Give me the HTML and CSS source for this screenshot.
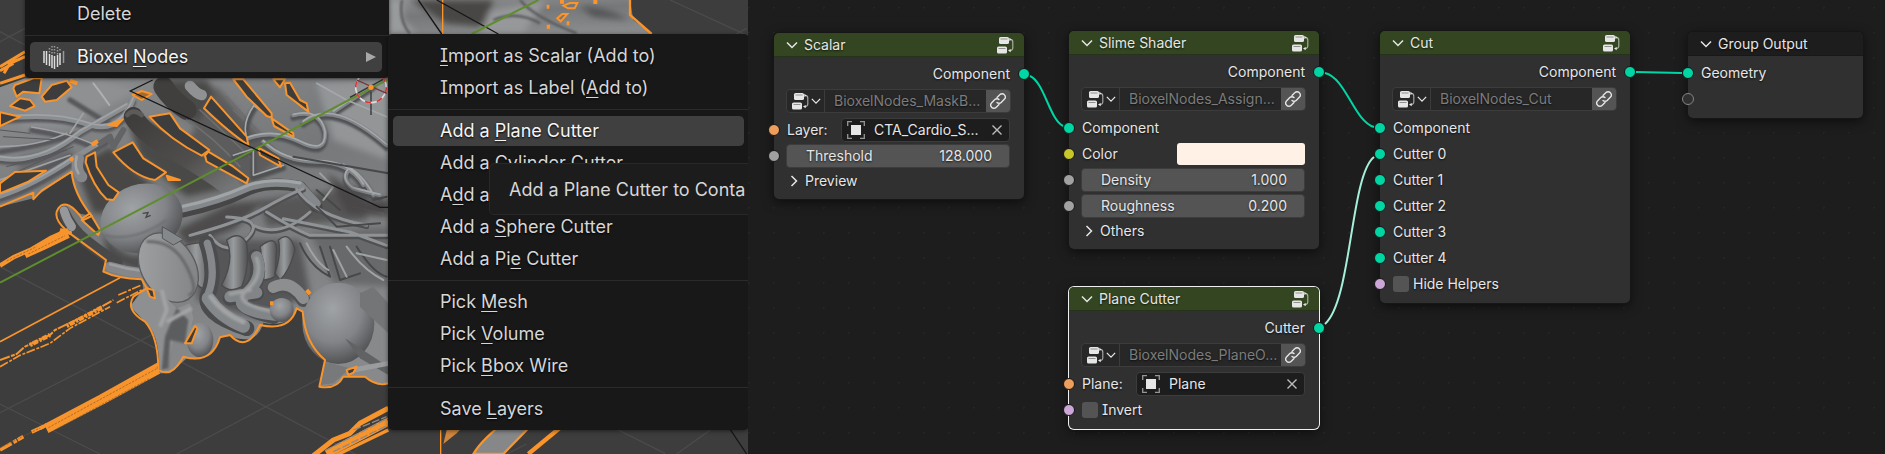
FILE: index.html
```html
<!DOCTYPE html>
<html lang="en">
<head>
<meta charset="utf-8">
<title>Bioxel Nodes</title>
<link rel="stylesheet" href="styles.css">
</head>
<body>
<svg class="defs" aria-hidden="true">
  <symbol id="i-group" viewBox="0 0 18 18">
    <rect x="3" y="1" width="10" height="7" rx="1.6"/><rect x="1" y="10.500" width="10" height="7" rx="1.600"/>
    <path d="M4.500 3h7M2.500 12.500h7" stroke="#222" stroke-opacity=".55" stroke-width=".8"/>
    <path d="M13.800 3.400c2.300 0 3 .8 3 2.700v5.600c0 1.900-.8 2.800-3.300 2.800" fill="none" stroke="currentColor" stroke-opacity=".65" stroke-width="1.200"/>
    <path d="M13.300 1.800l2.300 1.700-2.300 1.500zM14.700 13l-2.700 1.500 2.700 1.700z"/>
  </symbol>
  <symbol id="i-down" viewBox="0 0 12 12"><path d="M1 3.500l5 5 5-5" fill="none" stroke="currentColor" stroke-width="1.500"/></symbol>
  <symbol id="i-right" viewBox="0 0 12 12"><path d="M3.500 1l5 5-5 5" fill="none" stroke="currentColor" stroke-width="1.500"/></symbol>
  <symbol id="i-x" viewBox="0 0 12 12"><path d="M1.500 1.500l9 9M10.500 1.500l-9 9" fill="none" stroke="currentColor" stroke-opacity=".8" stroke-width="1.400"/></symbol>
  <symbol id="i-link" viewBox="0 0 18 18"><g fill="none" stroke="currentColor" stroke-width="1.400" stroke-linecap="round" stroke-linejoin="round"><path d="M8 5.600l3-3a2.900 2.900 0 0 1 4.200 0l.3.300a2.900 2.900 0 0 1 0 4.200l-3.300 3.300a2.900 2.900 0 0 1-4.200 0"/><path d="M10 12.400l-3 3a2.900 2.900 0 0 1-4.200 0l-.3-.3a2.900 2.900 0 0 1 0-4.200l3.300-3.300a2.900 2.900 0 0 1 4.200 0"/></g></symbol>
  <symbol id="i-object" viewBox="0 0 18 18"><rect x="4" y="4" width="10" height="10"/><path d="M.7 5V.7H5M13 .7h4.300V5M17.300 13v4.300H13M5 17.300H.7V13" fill="none" stroke="currentColor" stroke-opacity=".6" stroke-width="1.300"/></symbol>
</svg>

<main class="screen">
<section class="viewport" aria-label="3D Viewport">
  <svg class="scene" viewBox="0 0 2244 1362" preserveAspectRatio="xMinYMin slice" aria-hidden="true">
    <defs>
      <linearGradient id="body" x1="0" y1="0" x2=".4" y2="1"><stop offset="0" stop-color="#8b8d8f"/><stop offset=".45" stop-color="#767879"/><stop offset="1" stop-color="#87898b"/></linearGradient>
      <radialGradient id="ball" cx=".42" cy=".32" r=".75"><stop offset="0" stop-color="#a0a3a5"/><stop offset=".55" stop-color="#828487"/><stop offset="1" stop-color="#48484a"/></radialGradient>
      <linearGradient id="disc" x1="0" y1="0" x2="1" y2="1"><stop offset="0" stop-color="#a2a4a5"/><stop offset="1" stop-color="#7d7f80"/></linearGradient>
      <linearGradient id="tube" x1="0" y1="0" x2="1" y2="0"><stop offset="0" stop-color="#5f6062"/><stop offset=".45" stop-color="#999c9e"/><stop offset="1" stop-color="#515153"/></linearGradient>
      <linearGradient id="rib" x1="0" y1="0" x2="1" y2="1"><stop offset="0" stop-color="#3f3d3c"/><stop offset=".6" stop-color="#504e4d"/><stop offset="1" stop-color="#747576"/></linearGradient>
      <filter id="soft" x="-20%" y="-20%" width="140%" height="140%"><feGaussianBlur stdDeviation="9"/></filter>
      <filter id="soft2"><feGaussianBlur stdDeviation="3"/></filter>
    </defs>
    <rect width="2244" height="1362" fill="#3d3d3d"/>
    <g stroke="#4b4b4b" stroke-width="4" fill="none"><path d="M0 125L75 85M0 95l75 40M0 1238L1165 640M530 1362L1165 1026M0 800l410 215 755 400M0 1212l300 150M2010 0l240 110M2240 85l-130 70M1520 1362l60-30M1765 1245l230 115M2030 1362l160-115"/></g>

    <path d="M0 262L75 235H1165V1150H1125L1095 1130H1030L1010 1155 958 1160 975 1080 Q915 1030 908 935L890 925 Q870 985 790 968 Q770 1040 690 1008L660 1012 Q635 1090 560 1075L510 1120H478Q480 1000 435 965L390 920 430 865 425 838 Q350 835 310 815L318 780 230 715Q180 670 172 630 190 595 235 640L275 648Q220 580 215 515L100 595 0 620Z" fill="url(#body)"/>
    <g filter="url(#soft)">
      <path d="M225 500L330 440 460 560 330 640 280 640Z" fill="#484645"/><path d="M380 350Q540 370 700 560L560 590 420 470Z" fill="#4a4847"/>
      <path d="M470 240L620 240 760 430 700 440 520 330Z" fill="#4a4847"/><path d="M650 260L840 480 740 560 560 430Z" fill="#5d5c5c"/>
      <path d="M780 600L1100 560V660L800 680Z" fill="#565657"/><path d="M530 690L690 610 800 600 700 690 560 740Z" fill="#4e4c4c"/>
      <path d="M310 700Q380 790 440 760L430 820 320 780Z" fill="#4c4b4b"/><path d="M600 720H900L930 880 780 960 590 900Z" fill="#575759"/>
      <path d="M930 700L1165 680V860L1000 850Z" fill="#68696b"/><path d="M60 470L210 440 230 480 50 560Z" fill="#6a6b6d"/>
      <path d="M950 250L1165 240V480L1000 420Z" fill="#939597"/><path d="M120 260L300 240 420 270 200 380 60 380Z" fill="#8e9092"/>
    </g>
    <g fill="none" stroke-linecap="round" stroke-linejoin="round">
      <g stroke="#58595b" stroke-width="16" filter="url(#soft2)"><path d="M0 366Q160 346 260 381T400 306M0 456Q120 440 240 400M0 484Q120 504 240 404L380 324M0 600Q100 570 220 490L320 430M95 391Q200 406 290 446M60 540L210 470M210 300L340 380"/></g>
      <g stroke="#8b8e90" stroke-width="16"><path d="M0 356Q160 336 260 371T400 296M0 474Q120 494 240 396L380 316M0 588Q100 555 220 475L320 415"/></g>
      <g stroke="#a0a3a5" stroke-width="5"><path d="M0 352Q160 332 260 367T400 292M0 470Q120 490 240 392L380 312M0 582Q100 551 220 471M95 381Q200 396 290 436M0 540L210 466M0 440Q110 440 200 400M210 400L250 340"/></g>
      <path d="M10 410L180 420M20 500L200 450M40 520L220 440M0 390L90 400" stroke="#55575a" stroke-width="3"/>
      <path d="M490 260Q515 300 560 330" stroke="#413f3e" stroke-width="60"/><path d="M400 350Q430 400 520 450T690 560" stroke="url(#rib)" stroke-width="58"/><path d="M382 345Q400 325 425 345" stroke="#5c5b5a" stroke-width="14"/><path d="M570 258Q590 282 605 285" stroke="#8f9193" stroke-width="32"/>
      <path d="M235 475Q225 510 245 530" stroke="#85878a" stroke-width="34"/><path d="M230 470Q222 500 235 520" stroke="#a2a4a6" stroke-width="8"/><path d="M300 430L330 410 340 440 370 390" stroke="#636466" stroke-width="18"/>
      <path d="M190 635Q215 690 260 725T350 790" stroke="#4a494a" stroke-width="36"/><path d="M192 632Q200 660 215 680" stroke="#96989a" stroke-width="26"/><path d="M330 800Q380 815 430 820" stroke="#85878a" stroke-width="30"/><path d="M330 793Q380 808 430 813" stroke="#9c9ea0" stroke-width="8"/>
      <path d="M280 250Q300 275 328 315" stroke="#aeb0b2" stroke-width="6"/>
      <path d="M560 360Q640 410 720 500M600 330L760 480M680 290L800 420M700 330L830 450M540 410Q600 470 700 520" stroke="#6e6e6f" stroke-width="5"/>
      <g stroke="#505153" stroke-width="17" filter="url(#soft2)"><path d="M740 414Q730 374 765 324M740 424Q820 394 900 434T975 404Q960 334 880 354M790 434Q850 494 950 494T1090 564M910 374Q1000 304 1160 444M1000 344L1120 264M1030 504Q1080 524 1120 594M700 474L760 454V534L850 504M1050 514Q1020 544 1060 574L1140 594"/></g>
      <g stroke="#818487" stroke-width="12"><path d="M740 416Q820 386 900 426T975 396Q960 326 880 346M790 425Q850 485 950 485T1090 555M910 366Q1000 296 1160 436M1000 336L1120 256M1030 496Q1080 516 1120 586M1050 506Q1020 536 1060 566L1140 586"/></g>
      <g stroke="#a5a8aa" stroke-width="5"><path d="M738 404Q728 364 763 314M740 413Q820 383 900 423T975 393Q960 323 880 343M790 422Q850 482 950 482T1090 552M910 363Q1000 293 1160 433M1000 333L1120 253M1030 493Q1080 513 1120 583M700 466L760 446V526L850 496M1048 503Q1018 533 1058 563L1140 583M765 320L810 350M950 250L1040 300 1160 350"/></g>
      <path d="M550 635Q660 610 730 575T900 560L950 620" stroke="#464647" stroke-width="35"/><path d="M550 625Q660 600 730 568T900 555L950 610" stroke="#85888a" stroke-width="24"/><path d="M550 619Q660 594 730 562T900 549" stroke="#a2a5a7" stroke-width="9"/>
      <g stroke="#505052" stroke-width="15"><path d="M570 710Q720 670 790 630T910 570M630 710Q680 780 740 720T680 655M800 640Q880 690 930 710H1160M890 570Q940 650 1100 680M760 680Q840 720 930 640M850 660L1050 700 1160 740"/></g>
      <g stroke="#909395" stroke-width="9"><path d="M570 706Q720 666 790 626T910 566M630 706Q680 776 740 716T680 651M800 636Q880 686 930 706H1160M890 566Q940 646 1100 676M760 676Q840 716 930 636M850 656L1050 696 1160 736"/></g>
      <g stroke="#47484a" stroke-width="6"><path d="M900 730Q930 800 990 830L960 740M990 740L1020 840 1080 820M1070 740Q1120 820 1160 830M880 470L1165 520M950 620l60 60 130-10M950 570L1020 630M1120 600l40-10"/></g>
      <path d="M920 730Q950 790 985 810M1000 750L1040 830M1040 740Q1090 810 1150 840M1070 760L1160 780M960 520L1000 560 970 600M1060 620L1150 640" stroke="#a0a3a5" stroke-width="6"/>
      <path d="M980 520L1100 600 1165 600V650L1040 640Z" fill="#484747" stroke="none" filter="url(#soft)"/>
    </g>
    <ellipse cx="425" cy="655" rx="125" ry="102" transform="rotate(-18 425 655)" fill="url(#ball)"/><path d="M305 705Q400 730 500 660" stroke="#6b6c6e" stroke-width="5" fill="none" filter="url(#soft2)"/><path d="M428 640l16-2-6 14 14-6" stroke="#444" stroke-width="4" fill="none"/>
    <g fill="url(#tube)" stroke="#4b4b4d" stroke-width="4"><path d="M545 740Q600 720 640 735V850Q610 880 590 850Z"/><path d="M680 720Q720 690 740 730 750 800 725 860 690 880 665 855 705 780 680 720Z"/><path d="M780 740Q830 700 830 750L825 830Q790 850 765 830 790 770 780 740Z"/><path d="M835 720Q870 690 885 750 870 810 840 840L825 820Q845 760 835 720Z"/></g>
    <ellipse cx="505" cy="803" rx="80" ry="112" transform="rotate(-32 505 803)" fill="url(#disc)" stroke="#5a5b5d" stroke-width="4"/><path d="M440 725Q520 720 560 800T565 885" fill="none" stroke="#656668" stroke-width="8" filter="url(#soft2)"/><path d="M487 680L550 718 520 735 487 715Z" fill="#85888a" stroke="#555557" stroke-width="3"/>
    <g fill="none" stroke-linecap="round"><path d="M620 730Q650 820 625 880T740 985" stroke="#4b4c4e" stroke-width="46"/><path d="M622 730Q650 820 625 880" stroke="#85878a" stroke-width="22"/><path d="M625 895Q660 950 730 978" stroke="#85888a" stroke-width="40"/><path d="M632 890Q667 940 730 966" stroke="#a2a4a6" stroke-width="14" filter="url(#soft2)"/>
    <path d="M765 770Q790 840 740 880T820 950M690 895L770 880" stroke="#4b4c4e" stroke-width="44"/><path d="M770 770Q795 830 740 880T825 945M690 890L770 878" stroke="#828587" stroke-width="34"/><path d="M770 775Q790 830 740 870T825 935M690 882L750 870" stroke="#9fa1a3" stroke-width="11" filter="url(#soft2)"/>
    <path d="M820 865Q870 840 910 900" stroke="#505153" stroke-width="42"/><path d="M820 862Q870 835 910 895" stroke="#8c8e90" stroke-width="34"/></g>
    <circle cx="845" cy="930" r="36" fill="url(#ball)"/><ellipse cx="600" cy="1020" rx="40" ry="52" fill="url(#ball)"/>
    <path d="M392 918L430 870 480 875 530 925 570 910 580 955 560 1030 520 1020 500 1112 478 1108Q480 1000 435 965Z" fill="#8d8f91"/><path d="M530 925L565 960 555 1030 510 1020 505 1105 485 1110 495 1010Z" fill="#5c5d5f" filter="url(#soft2)"/><path d="M485 870L500 930 480 980M575 925L500 965" fill="none" stroke="#a2a4a6" stroke-width="12" filter="url(#soft2)"/>
    <ellipse cx="1015" cy="970" rx="108" ry="122" fill="url(#ball)"/><path d="M1080 880L1120 860 1165 910V1000L1080 920Z" fill="#737577"/><path d="M1035 1015L1165 1100V1125L1080 1075Z" fill="#606264"/><path d="M975 1085L1050 1105 1000 1150 960 1155Z" fill="#77797b"/><path d="M1060 1110L1165 1090" stroke="#9a9c9e" stroke-width="15"/>

    <g fill="#3d3d3d" stroke="#f8942c" stroke-width="6" stroke-linejoin="round">
      <path d="M45 255L100 235H125L118 280 70 275 50 290 40 265Z"/><path d="M125 290L155 255 200 242 215 262 170 300 135 305Z"/><path d="M30 318L60 295 90 300 104 318 75 332Z"/><path d="M0 337L60 350 0 378Z"/><path d="M0 550L45 516 138 512 85 545 0 580Z"/>
      <path d="M285 457L290 500 325 555 356 577 340 600 320 598Q280 560 257 487L260 470Z"/><path d="M340 457L398 427 430 475 498 517 465 540Q400 530 340 457Z"/><path d="M448 350L510 340 540 385 628 450 605 467Q510 420 448 350Z"/><path d="M612 325L633 290 740 410 745 435Q690 400 612 325Z"/><path d="M615 467L625 455 700 500 745 535 740 550 620 485Z"/><path d="M700 238H730L815 340V353L800 348 740 290Z"/><path d="M820 238H855L840 262Z"/><path d="M855 250L870 248 900 300 920 310 925 335 860 285Z"/><path d="M815 355L880 400 880 410 822 378Z"/><path d="M775 443L835 475 843 500 780 465Z"/><path d="M398 285L425 273 455 282 425 300Z" fill="#a06b35"/><path d="M325 375L368 358 350 378Z" fill="#f8942c"/><path d="M500 527L540 540 505 540Z" fill="#f8942c"/><path d="M247 655L270 640 300 690 295 705 245 660Z"/><path d="M555 1030L585 978 592 985 575 1030Z"/><path d="M440 865L460 870 465 895 450 890Z"/><path d="M1040 1110L1070 1100 1060 1118 1045 1125Z"/>
    </g>
    <g fill="none" stroke="#f8942c" stroke-width="6" stroke-linejoin="round"><path d="M0 620L100 578V598L125 572 215 515Q220 580 275 648L250 660Q200 590 175 625T230 715L318 780 310 815Q350 835 425 838L440 865 400 890Q375 930 435 965 475 1010 475 1110 515 1135 550 1070 635 1095 660 1012L690 1005Q740 1060 780 975 870 995 890 925L908 935Q915 1030 975 1080L958 1160Q1010 1170 1030 1130H1095Q1130 1160 1165 1150"/><path d="M920 870l10 12M810 910h10M210 475l10 5M275 435l18-12M210 242l22 8" stroke-width="12"/></g>
    <g fill="none" stroke="#f8942c" stroke-linejoin="round">
      <path d="M0 200L75 155M0 212L40 190M0 250L75 225M12 220L30 190 75 170" stroke-width="9"/>
      <path d="M0 797L40 772 90 750 150 715 205 690" stroke-width="13"/><path d="M75 765L130 740 205 704" stroke-width="20"/><path d="M180 690L215 700" stroke-width="12"/>
      <path d="M0 1025L360 833" stroke-width="5"/>
      <path d="M0 1080L50 1062 75 1040 150 1005 165 990 260 945 340 900" stroke-width="6" stroke-dasharray="31 4 12 3"/><path d="M0 1100L60 1066 150 1030 210 985 330 920M355 885L425 855M350 908L425 870" stroke-width="5" stroke-dasharray="27 5 9 4"/><path d="M90 1035L150 1005M200 978L310 920" stroke-width="13" stroke-dasharray="7 3 16 5"/>
      <path d="M0 1350L70 1310M95 1296L140 1275" stroke-width="11" stroke-dasharray="40 6 12 3"/><path d="M120 1285L300 1190 475 1092" stroke-width="11"/><path d="M140 1288L310 1200 475 1110" stroke-width="24"/><path d="M250 1228L330 1190" stroke-width="12"/>
      <path d="M930 1375L1000 1320 1050 1300 1080 1270 1165 1225" stroke-width="15"/><path d="M980 1362L1165 1265" stroke-width="24"/><path d="M1010 1365L1165 1290" stroke-width="10"/>
    </g>
    <path d="M145 1283L470 1106M170 1287L450 1135M0 1344l120-60M85 762l110-55M20 783l90-43" fill="none" stroke="#8a5a26" stroke-width="2" stroke-dasharray="7 4"/>
    <path d="M975 1352l190-98M1000 1355l165-80M1060 1290l100-40" fill="none" stroke="#908a84" stroke-width="4" stroke-dasharray="24 6"/>
    <path d="M0 848L1165 238" stroke="#5f8d2d" stroke-width="6"/><path d="M458 240L391 273 1140 622H1165" fill="none" stroke="#171717" stroke-width="4"/><path d="M1050 292L1155 235M1113 275V345" stroke="#333" stroke-width="4"/>
    <circle cx="1113" cy="262" r="46" fill="none" stroke="#ddd" stroke-width="5"/><circle cx="1113" cy="262" r="46" fill="none" stroke="#df3434" stroke-width="5" stroke-dasharray="18 18"/><path d="M1070 240L1160 280" stroke="#7d3038" stroke-width="4"/><circle cx="1113" cy="262" r="8" fill="#fb952b"/>

    <path d="M1165 0H1890L1900 60 1955 102H1165Z" fill="url(#body)"/><g filter="url(#soft)"><path d="M1230 0H1480L1460 80 1340 70Z" fill="#484645"/><path d="M1165 0H1210V60L1250 100H1165Z" fill="#999b9d"/><path d="M1740 20Q1820 20 1890 60L1780 50Z" fill="#515152"/><path d="M1470 30l170-30-70 100h-130z" fill="#96989a"/></g><path d="M1206 0Q1195 60 1230 102M1480 60Q1550 30 1620 70M1560 0Q1600 50 1730 100" stroke="#58595b" stroke-width="7" fill="none" filter="url(#soft2)"/>
    <path d="M1890 0V45L1955 102" fill="none" stroke="#fb952b" stroke-width="7"/><path d="M1690 17l20-8h22l-8 16h-20zM1672 55l15-13h15l-20 22z" fill="#777" stroke="#fb952b" stroke-width="6"/><path d="M1640 20h8M1680 5h12M1640 80h10M1780 6h12M1700 70h8" stroke="#fb952b" stroke-width="12"/><path d="M1328 0V102M1322 1235V1362" stroke="#fb952b" stroke-width="4"/><path d="M1255 0l70 102M1310 0l185 102M2155 1235l85 127" stroke="#171717" stroke-width="4"/><path d="M1615 0L1415 102" stroke="#5f8d2d" stroke-width="6"/>
    <path d="M1330 1332L1370 1300 1430 1238H1400L1340 1290Z" fill="#cf8740"/><path d="M1420 1362Q1450 1310 1550 1240H1615L1580 1290 1510 1362Z" fill="#858789" stroke="#fb952b" stroke-width="7"/><path d="M1585 1362L1735 1238" stroke="#fb952b" stroke-width="13"/>
  </svg>

  <div class="menu menu-main" role="menu">
    <button class="item" role="menuitem">Delete</button>
    <hr class="rule">
    <button class="item active" role="menuitem">
      <svg class="bioxel" viewBox="0 0 22 24" aria-hidden="true"><g stroke="#ddd" stroke-width="1.500"><path d="M1 6v12M3.500 6v14M6.500 9v12M9 10v13M11.500 11v13M14.500 10v12M17 8v12" /><path d="M20.500 6v12" stroke="#999"/><path d="M6.500 3v5M9 1v8M11.500 1v9M14.500 2v8M17 4v3" stroke-dasharray="1.500 1.500" stroke="#999"/></g></svg>
      <span>Bioxel <u>N</u>odes</span><span class="arrow" aria-hidden="true"></span>
    </button>
  </div>

  <div class="menu menu-sub" role="menu">
    <button class="item" role="menuitem"><span><u>I</u>mport as Scalar (Add to)</span></button>
    <button class="item" role="menuitem"><span>Import as Label (<u>A</u>dd to)</span></button>
    <hr class="rule">
    <button class="item active" role="menuitem"><span>Add a <u>P</u>lane Cutter</span></button>
    <button class="item" role="menuitem"><span>Add a Cylinder Cutter</span></button>
    <button class="item" role="menuitem"><span>A<u>d</u>d a</span></button>
    <button class="item" role="menuitem"><span>Add a <u>S</u>phere Cutter</span></button>
    <button class="item" role="menuitem"><span>Add a Pi<u>e</u> Cutter</span></button>
    <hr class="rule">
    <button class="item" role="menuitem"><span>Pick <u>M</u>esh</span></button>
    <button class="item" role="menuitem"><span>Pick <u>V</u>olume</span></button>
    <button class="item" role="menuitem"><span>Pick <u>B</u>box Wire</span></button>
    <hr class="rule">
    <button class="item" role="menuitem"><span>Save <u>L</u>ayers</span></button>
  </div>
  <div class="tooltip" role="tooltip">Add a Plane Cutter to Conta</div>
</section>

<section class="editor" aria-label="Node Editor">
  <article class="node scalar">
    <header class="head"><button class="fold" aria-label="Collapse"><svg><use href="#i-down"/></svg></button><h2>Scalar</h2><svg class="kind"><use href="#i-group"/></svg></header>
    <div class="row out">Component<i class="socket"></i></div>
    <div class="group"><button class="pick" aria-label="Browse node groups"><svg class="g"><use href="#i-group"/></svg><svg class="c"><use href="#i-down"/></svg></button><input aria-label="Node group" value="BioxelNodes_MaskB..." readonly><button class="link" aria-label="Link"><svg><use href="#i-link"/></svg></button></div>
    <div class="row"><i class="socket orange"></i><label for="layer">Layer:</label><div class="object"><svg class="o"><use href="#i-object"/></svg><input id="layer" value="CTA_Cardio_S..."><button aria-label="Clear"><svg><use href="#i-x"/></svg></button></div></div>
    <div class="row"><i class="socket grey"></i><label class="number"><span>Threshold</span><input value="128.000"></label></div>
    <button class="panel"><svg><use href="#i-right"/></svg>Preview</button>
  </article>

  <article class="node slime">
    <header class="head"><button class="fold" aria-label="Collapse"><svg><use href="#i-down"/></svg></button><h2>Slime Shader</h2><svg class="kind"><use href="#i-group"/></svg></header>
    <div class="row out">Component<i class="socket"></i></div>
    <div class="group"><button class="pick" aria-label="Browse node groups"><svg class="g"><use href="#i-group"/></svg><svg class="c"><use href="#i-down"/></svg></button><input aria-label="Node group" value="BioxelNodes_Assign..." readonly><button class="link" aria-label="Link"><svg><use href="#i-link"/></svg></button></div>
    <div class="row"><i class="socket"></i>Component</div>
    <div class="row"><i class="socket yellow"></i><label for="color">Color</label><input class="swatch" id="color" type="color" value="#fff1e5"></div>
    <div class="row"><i class="socket grey"></i><label class="number"><span>Density</span><input value="1.000"></label></div>
    <div class="row"><i class="socket grey"></i><label class="number"><span>Roughness</span><input value="0.200"></label></div>
    <button class="panel"><svg><use href="#i-right"/></svg>Others</button>
  </article>

  <article class="node plane selected">
    <header class="head"><button class="fold" aria-label="Collapse"><svg><use href="#i-down"/></svg></button><h2>Plane Cutter</h2><svg class="kind"><use href="#i-group"/></svg></header>
    <div class="row out">Cutter<i class="socket"></i></div>
    <div class="group"><button class="pick" aria-label="Browse node groups"><svg class="g"><use href="#i-group"/></svg><svg class="c"><use href="#i-down"/></svg></button><input aria-label="Node group" value="BioxelNodes_PlaneO..." readonly><button class="link" aria-label="Link"><svg><use href="#i-link"/></svg></button></div>
    <div class="row"><i class="socket orange"></i><label for="plane">Plane:</label><div class="object"><svg class="o"><use href="#i-object"/></svg><input id="plane" value="Plane"><button aria-label="Clear"><svg><use href="#i-x"/></svg></button></div></div>
    <div class="row"><i class="socket violet"></i><label class="check"><input type="checkbox">Invert</label></div>
  </article>

  <article class="node cut">
    <header class="head"><button class="fold" aria-label="Collapse"><svg><use href="#i-down"/></svg></button><h2>Cut</h2><svg class="kind"><use href="#i-group"/></svg></header>
    <div class="row out">Component<i class="socket"></i></div>
    <div class="group"><button class="pick" aria-label="Browse node groups"><svg class="g"><use href="#i-group"/></svg><svg class="c"><use href="#i-down"/></svg></button><input aria-label="Node group" value="BioxelNodes_Cut" readonly><button class="link" aria-label="Link"><svg><use href="#i-link"/></svg></button></div>
    <div class="row"><i class="socket"></i>Component</div>
    <div class="row"><i class="socket"></i>Cutter 0</div>
    <div class="row"><i class="socket"></i>Cutter 1</div>
    <div class="row"><i class="socket"></i>Cutter 2</div>
    <div class="row"><i class="socket"></i>Cutter 3</div>
    <div class="row"><i class="socket"></i>Cutter 4</div>
    <div class="row"><i class="socket violet"></i><label class="check"><input type="checkbox">Hide Helpers</label></div>
  </article>

  <article class="node output">
    <header class="head dark"><button class="fold" aria-label="Collapse"><svg><use href="#i-down"/></svg></button><h2>Group Output</h2></header>
    <div class="row"><i class="socket"></i>Geometry</div>
    <div class="row"><i class="socket empty"></i></div>
  </article>

  <svg class="wires" aria-hidden="true"><g fill="none" stroke="#00d6a3" stroke-width="2"><path d="M282 76C296 82 302 120 315 126"/><path d="M577 73C598 78 606 121 626 127"/><path d="M888 72L934 73"/><path d="M577 324C604 300 602 176 626 157" stroke="#a5f0da"/></g></svg>
</section>
</main>
</body>
</html>
```
FILE: styles.css
```css
* { box-sizing: border-box; }
body {
  margin: 0;
  background: #1d1d1d;
  color: #e6e6e6;
  font: 14px/20px Inter, "Liberation Sans", sans-serif;
  font-feature-settings: "cv08";
}
button, input { font: inherit; font-feature-settings: inherit; color: inherit; border: 0; padding: 0; margin: 0; background: none; min-width: 0; text-shadow: inherit; }
svg { display: block; flex: none; fill: currentColor; }
.defs { position: absolute; width: 0; height: 0; }
.screen { display: grid; grid-template-columns: 748fr 1137fr; min-height: 100vh; overflow: hidden; }

.viewport { position: relative; overflow: hidden; background: #3d3d3d; }
.scene { position: absolute; inset: 0; width: 100%; height: 100%; }
.menu {
  position: absolute;
  display: flex;
  flex-direction: column;
  padding: 6px 5px 5px;
  background: #181818;
  border-radius: 5px;
  box-shadow: 0 1px 4px rgba(0, 0, 0, .5);
  font-size: 18px;
  line-height: 24px;
  color: #d6d6d6;
}
.menu-main { left: 25px; top: -8px; width: 364px; }
.menu-sub { left: 388px; top: 34px; width: 361px; }
.item { display: flex; align-items: center; height: 32px; padding: 0 6px 0 47px; text-align: left; white-space: nowrap; border-radius: 5px; text-shadow: 0 1px 2px #000; }
.item.active { background: #404040; color: #f5f5f5; background-clip: padding-box; border-top: 1px solid transparent; border-bottom: 1px solid transparent; }
.menu-main .active { margin-right: 2px; }
.item u { text-underline-offset: 3px; text-decoration-thickness: 1px; }
.rule { width: calc(100% + 10px); height: 1px; margin: 5px -5px; border: 0; background: #2b2b2b; flex: none; }
.bioxel { width: 22px; height: 24px; margin: 0 12px 0 -34px; }
.arrow { margin-left: auto; border-left: 10px solid #a8a8a8; border-top: 5px solid transparent; border-bottom: 5px solid transparent; }
.tooltip {
  position: absolute;
  left: 489px;
  top: 163px;
  padding: 14px 19px 12px;
  background: #1c1c1c;
  border: 1px solid #282828;
  border-radius: 5px;
  font-size: 18px;
  line-height: 24px;
  color: #d6d6d6;
  white-space: nowrap;
}

.editor {
  position: relative;
  background: #1d1d1d radial-gradient(circle, #252525 1px, transparent 1px) -12px -5px / 25px 25px;
}
.wires { position: absolute; inset: 0; width: 100%; height: 100%; pointer-events: none; }
.node {
  position: absolute;
  width: 250px;
  padding-bottom: 6px;
  background: #303030;
  border-radius: 5px;
  box-shadow: 0 0 0 1px #161616, 0 3px 12px rgba(0, 0, 0, .6);
  text-shadow: 0 1px 2px rgba(0, 0, 0, .7);
}
.scalar { left: 26px; top: 33px; }
.slime { left: 321px; top: 31px; }
.plane { left: 321px; top: 287px; }
.cut { left: 632px; top: 31px; }
.output { left: 940px; top: 32px; width: 175px; }
.selected { box-shadow: 0 0 0 1px #f0f0f0, 0 3px 12px rgba(0, 0, 0, .6); }
.head { display: flex; align-items: center; gap: 6px; height: 24px; margin-bottom: 4px; padding: 0 10px 0 12px; background: #344621; border-radius: 5px 5px 0 0; border-bottom: 1px solid #26331b; }
.head.dark { background: #1d1d1d; border-color: #181818; }
.head h2 { flex: 1; margin: 0; font-size: inherit; font-weight: 400; }
.fold svg, .panel svg { width: 12px; height: 12px; }
.kind, .g, .o, .link svg { width: 18px; height: 18px; }
.row { position: relative; display: flex; align-items: center; height: 26px; padding: 0 14px 0 13px; }
.out { justify-content: flex-end; }
.socket { position: absolute; left: -6px; top: 7px; width: 12px; height: 12px; border-radius: 50%; background: #00d6a3; border: 1px solid #161616; }
.out .socket { left: auto; right: -6px; }
.orange { background: #ed9e5c; }
.grey { background: #a1a1a1; }
.yellow { background: #c7c729; }
.violet { background: #cca6d6; }
.empty { background: #303030; border-color: #858585; }
.group { display: flex; height: 24px; margin: 2px 13px 4px 12px; background: #272727; border: 1px solid #3c3c3c; border-radius: 4px; overflow: hidden; }
.pick { display: flex; align-items: center; gap: 2px; width: 38px; flex: none; padding-left: 4px; border-right: 1px solid #3c3c3c; }
.c { width: 10px; height: 10px; }
.group input { flex: 1; padding: 0 0 0 9px; color: #7c7c7c; }
.link { display: grid; place-items: center; flex: none; width: 24px; background: #545454; }
.object { display: flex; align-items: center; width: 169px; height: 24px; margin-left: auto; padding: 0 6px 0 5px; background: #1d1d1d; border: 1px solid #3c3c3c; border-radius: 4px; }
.object input { flex: 1; padding-left: 9px; }
.object svg:not(.o) { width: 12px; height: 12px; }
.number { display: flex; align-items: center; flex: 1; min-width: 0; height: 24px; margin-left: -1px; padding: 0 17px 0 19px; background: #545454; border: 1px solid #3c3c3c; border-radius: 4px; }
.number input { flex: 1; width: 0; text-align: right; }
.swatch { width: 128px; height: 22px; margin-left: auto; }
.swatch::-webkit-color-swatch-wrapper { padding: 0; }
.swatch::-webkit-color-swatch { border: 0; border-radius: 3px; }
.check { display: flex; align-items: center; gap: 4px; }
.check input { appearance: none; width: 16px; height: 16px; border-radius: 3px; background: #545454; }
.panel { display: flex; align-items: center; gap: 5px; height: 24px; padding-left: 14px; }
```
